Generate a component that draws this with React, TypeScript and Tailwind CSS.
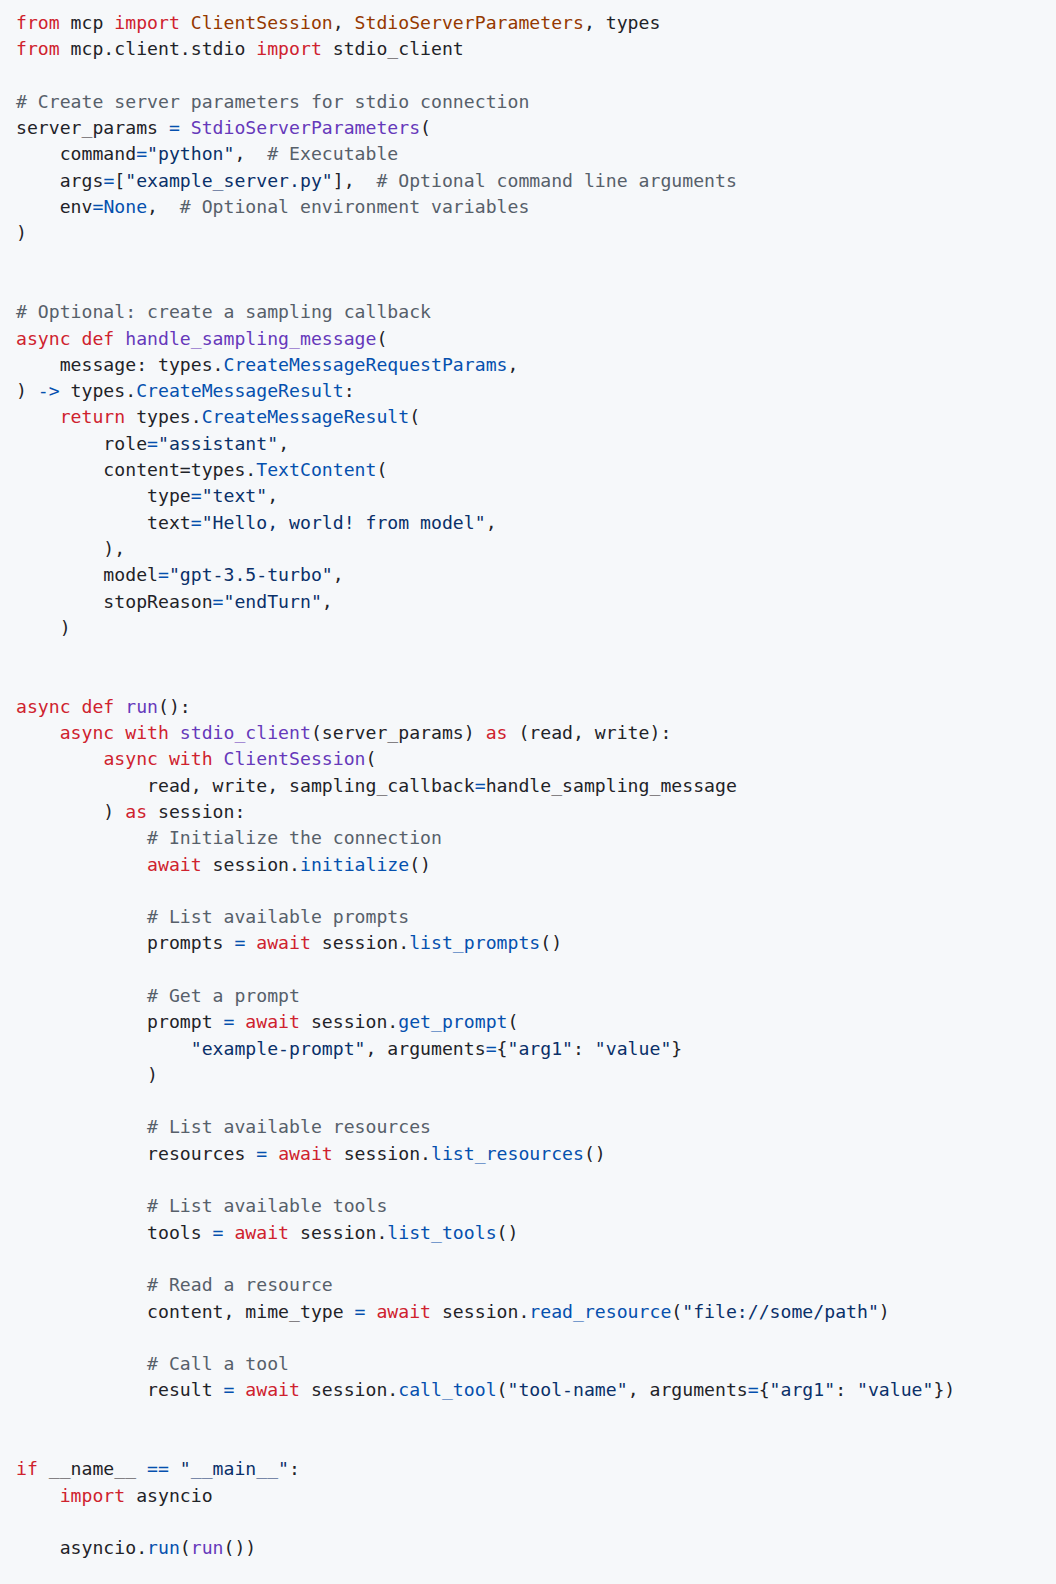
import React from "react";

// token colours, github light theme
const K = "text-[#cf222e]"; // keyword
const F = "text-[#6639ba]"; // function / class def
const B = "text-[#0550ae]"; // constant, method, operator
const S = "text-[#0a3069]"; // string
const C = "text-[#57606a]"; // comment
const O = "text-[#953800]"; // imported name
const T = ""; // plain

type Tok = [string, string];

const lines: Tok[][] = [
  [[K, "from"], [T, " mcp "], [K, "import"], [T, " "], [O, "ClientSession"], [T, ", "], [O, "StdioServerParameters"], [T, ", types"]],
  [[K, "from"], [T, " mcp.client.stdio "], [K, "import"], [T, " stdio_client"]],
  [],
  [[C, "# Create server parameters for stdio connection"]],
  [[T, "server_params "], [B, "="], [T, " "], [F, "StdioServerParameters"], [T, "("]],
  [[T, "    command"], [B, "="], [S, "\"python\""], [T, ",  "], [C, "# Executable"]],
  [[T, "    args"], [B, "="], [T, "["], [S, "\"example_server.py\""], [T, "],  "], [C, "# Optional command line arguments"]],
  [[T, "    env"], [B, "="], [B, "None"], [T, ",  "], [C, "# Optional environment variables"]],
  [[T, ")"]],
  [],
  [],
  [[C, "# Optional: create a sampling callback"]],
  [[K, "async"], [T, " "], [K, "def"], [T, " "], [F, "handle_sampling_message"], [T, "("]],
  [[T, "    message: types."], [B, "CreateMessageRequestParams"], [T, ","]],
  [[T, ") "], [B, "->"], [T, " types."], [B, "CreateMessageResult"], [T, ":"]],
  [[T, "    "], [K, "return"], [T, " types."], [B, "CreateMessageResult"], [T, "("]],
  [[T, "        role"], [B, "="], [S, "\"assistant\""], [T, ","]],
  [[T, "        content=types."], [B, "TextContent"], [T, "("]],
  [[T, "            type"], [B, "="], [S, "\"text\""], [T, ","]],
  [[T, "            text"], [B, "="], [S, "\"Hello, world! from model\""], [T, ","]],
  [[T, "        ),"]],
  [[T, "        model"], [B, "="], [S, "\"gpt-3.5-turbo\""], [T, ","]],
  [[T, "        stopReason"], [B, "="], [S, "\"endTurn\""], [T, ","]],
  [[T, "    )"]],
  [],
  [],
  [[K, "async"], [T, " "], [K, "def"], [T, " "], [F, "run"], [T, "():"]],
  [[T, "    "], [K, "async"], [T, " "], [K, "with"], [T, " "], [F, "stdio_client"], [T, "(server_params) "], [K, "as"], [T, " (read, write):"]],
  [[T, "        "], [K, "async"], [T, " "], [K, "with"], [T, " "], [F, "ClientSession"], [T, "("]],
  [[T, "            read, write, sampling_callback"], [B, "="], [T, "handle_sampling_message"]],
  [[T, "        ) "], [K, "as"], [T, " session:"]],
  [[T, "            "], [C, "# Initialize the connection"]],
  [[T, "            "], [K, "await"], [T, " session."], [B, "initialize"], [T, "()"]],
  [],
  [[T, "            "], [C, "# List available prompts"]],
  [[T, "            prompts "], [B, "="], [T, " "], [K, "await"], [T, " session."], [B, "list_prompts"], [T, "()"]],
  [],
  [[T, "            "], [C, "# Get a prompt"]],
  [[T, "            prompt "], [B, "="], [T, " "], [K, "await"], [T, " session."], [B, "get_prompt"], [T, "("]],
  [[T, "                "], [S, "\"example-prompt\""], [T, ", arguments"], [B, "="], [T, "{"], [S, "\"arg1\""], [T, ": "], [S, "\"value\""], [T, "}"]],
  [[T, "            )"]],
  [],
  [[T, "            "], [C, "# List available resources"]],
  [[T, "            resources "], [B, "="], [T, " "], [K, "await"], [T, " session."], [B, "list_resources"], [T, "()"]],
  [],
  [[T, "            "], [C, "# List available tools"]],
  [[T, "            tools "], [B, "="], [T, " "], [K, "await"], [T, " session."], [B, "list_tools"], [T, "()"]],
  [],
  [[T, "            "], [C, "# Read a resource"]],
  [[T, "            content, mime_type "], [B, "="], [T, " "], [K, "await"], [T, " session."], [B, "read_resource"], [T, "("], [S, "\"file://some/path\""], [T, ")"]],
  [],
  [[T, "            "], [C, "# Call a tool"]],
  [[T, "            result "], [B, "="], [T, " "], [K, "await"], [T, " session."], [B, "call_tool"], [T, "("], [S, "\"tool-name\""], [T, ", arguments"], [B, "="], [T, "{"], [S, "\"arg1\""], [T, ": "], [S, "\"value\""], [T, "})"]],
  [],
  [],
  [[K, "if"], [T, " __name__ "], [B, "=="], [T, " "], [S, "\"__main__\""], [T, ":"]],
  [[T, "    "], [K, "import"], [T, " asyncio"]],
  [],
  [[T, "    asyncio."], [B, "run"], [T, "("], [F, "run"], [T, "())"]],
];

export default function App() {
  return (
    <div className="min-h-[1584px] w-full bg-[#f6f8fa]">
      <pre className="pl-4 pt-[10px] font-['DejaVu_Sans_Mono',monospace] text-[18.15px] leading-[26.3px] text-[#1f2328]">
        {lines.map((line, i) => (
          <div key={i} className="h-[26.3px] whitespace-pre">
            {line.map(([cls, text], j) => (
              <span key={j} className={cls}>
                {text}
              </span>
            ))}
          </div>
        ))}
      </pre>
    </div>
  );
}
